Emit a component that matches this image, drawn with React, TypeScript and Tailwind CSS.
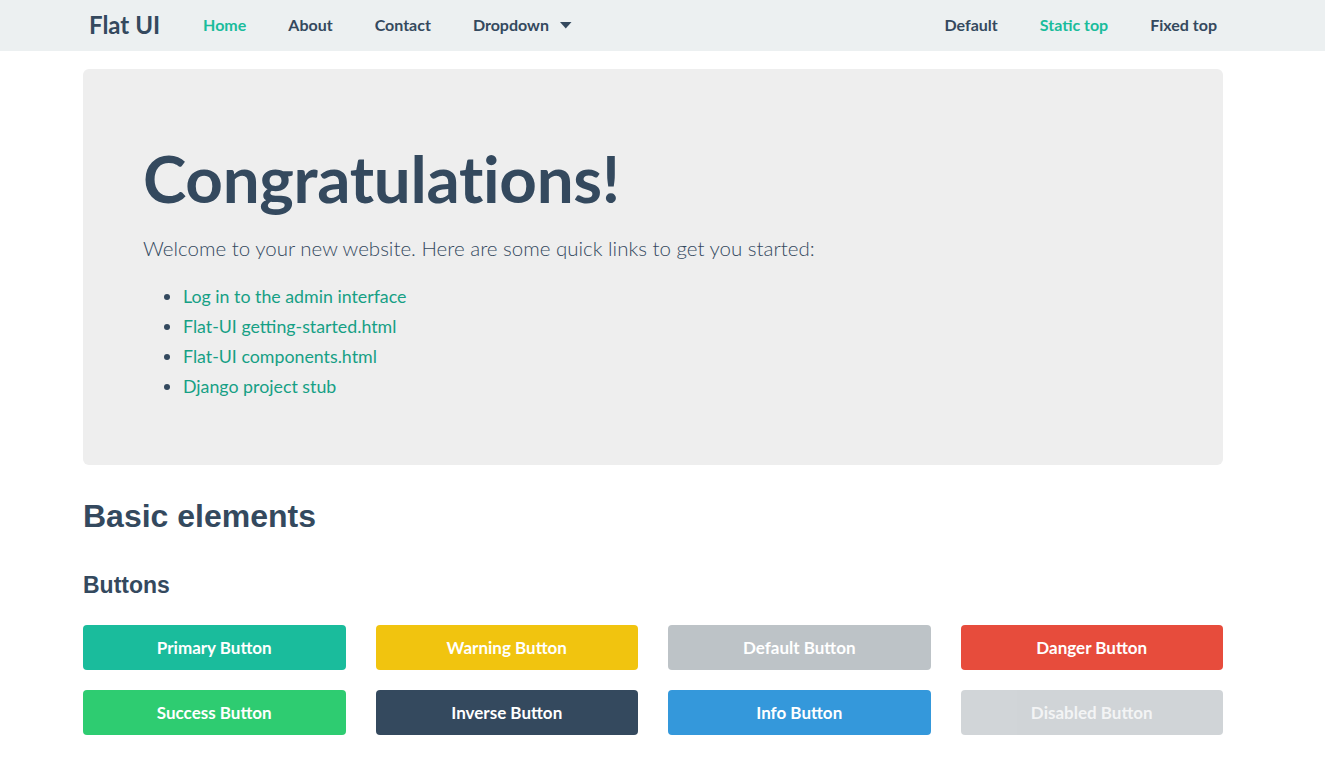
import React from "react";

const buttons = [
  { label: "Primary Button", cls: "bg-[#1abc9c] text-white" },
  { label: "Warning Button", cls: "bg-[#f1c40f] text-white" },
  { label: "Default Button", cls: "bg-[#bdc3c7] text-white" },
  { label: "Danger Button", cls: "bg-[#e74c3c] text-white" },
  { label: "Success Button", cls: "bg-[#2ecc71] text-white" },
  { label: "Inverse Button", cls: "bg-[#34495e] text-white" },
  { label: "Info Button", cls: "bg-[#3498db] text-white" },
  { label: "Disabled Button", cls: "bg-[#bdc3c7] text-white/75 opacity-70" },
];

export default function App() {
  return (
    <div className="min-h-[772px] bg-white text-[#34495e]" style={{ fontFamily: "Lato, 'Noto Sans', sans-serif" }}>
      <nav className="h-[51px] bg-[#ecf0f1]">
        <div className="flex h-full w-[1217px] items-center justify-between pb-[2px] pl-[89px]">
          <div className="flex items-center">
            <span className="text-[24px] font-bold text-[#34495e]">Flat UI</span>
            <div className="ml-[43px] flex items-center gap-[42px] text-[16px] font-bold">
              <a className="text-[#1abc9c]">Home</a>
              <a>About</a>
              <a>Contact</a>
              <a className="flex items-center gap-[11px]">
                Dropdown
                <svg width="12" height="8" viewBox="0 0 12 8"><path d="M0 1h11.5L5.75 7.5z" fill="#34495e" /></svg>
              </a>
            </div>
          </div>
          <div className="flex items-center gap-[42px] text-[16px] font-bold">
            <a>Default</a>
            <a className="text-[#1abc9c]">Static top</a>
            <a>Fixed top</a>
          </div>
        </div>
      </nav>

      <div className="ml-[83px] w-[1140px]">
        <div className="mt-[18px] h-[396px] rounded-[6px] bg-[#eeeeee] px-[60px] pt-[76px]">
          <h1 className="text-[65.5px] font-bold leading-[1] tracking-[-0.3px]">Congratulations!</h1>
          <p className="mt-[22px] text-[20.5px] font-light leading-[30px]">
            Welcome to your new website. Here are some quick links to get you started:
          </p>
          <ul className="mt-[18px] list-disc pl-[40px] text-[17.8px] leading-[30px] marker:text-[#34495e]">
            <li><a className="text-[#16a085]">Log in to the admin interface</a></li>
            <li><a className="text-[#16a085]">Flat-UI getting-started.html</a></li>
            <li><a className="text-[#16a085]">Flat-UI components.html</a></li>
            <li><a className="text-[#16a085]">Django project stub</a></li>
          </ul>
        </div>

        <h2 className="mt-[31px] text-[32px] font-bold leading-[40px]" style={{ fontFamily: "'Liberation Sans', Arial, sans-serif" }}>
          Basic elements
        </h2>
        <h3 className="mt-[34px] text-[23px] font-bold leading-[30px]" style={{ fontFamily: "'Liberation Sans', Arial, sans-serif" }}>
          Buttons
        </h3>
        <div className="mt-[25px] grid grid-cols-4 gap-x-[30px] gap-y-[20px]">
          {buttons.map((b) => (
            <div key={b.label} className={`flex h-[45px] items-center justify-center rounded-[4px] text-[17px] font-bold ${b.cls}`}>
              {b.label}
            </div>
          ))}
        </div>
      </div>
    </div>
  );
}
